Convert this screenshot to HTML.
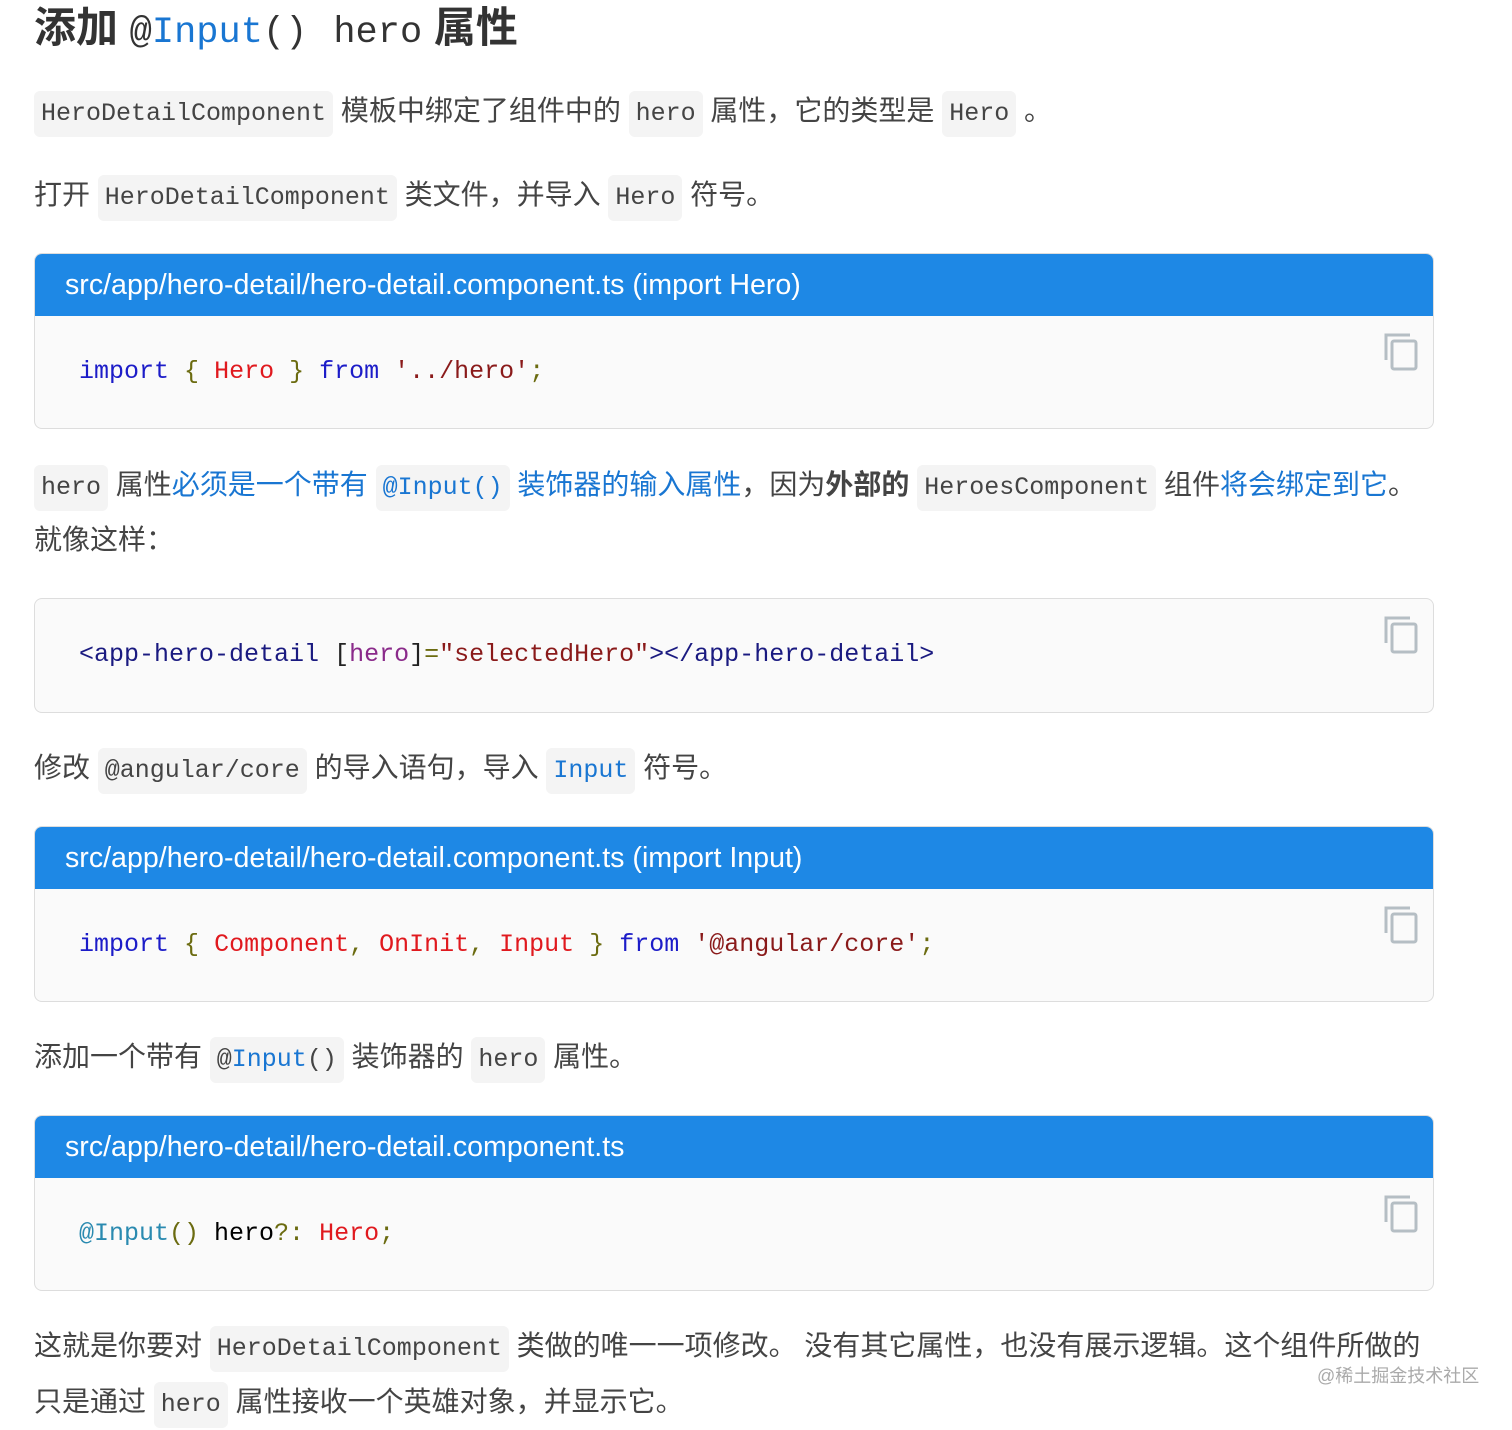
<!DOCTYPE html>
<html><head><meta charset="utf-8"><style>
body{margin:0;width:1512px;height:1419px;background:#fff;position:relative;overflow:hidden;font-family:"Liberation Sans","Noto Sans CJK SC",sans-serif;color:#444}
.ln{position:absolute;left:34px;white-space:nowrap;font-size:28px;height:56px;line-height:56px}
code{font-family:"Liberation Mono","Noto Sans CJK SC",monospace;font-size:25px;background:#f4f4f4;border-radius:6px;padding:0 7px;display:inline-block;line-height:46px;color:#444}
.a{color:#1976d2}
.blk{position:absolute;left:34px;width:1398px;border:1px solid #ddd;border-radius:8px;background:#fafafa;overflow:hidden}
.hd{background:#1e88e5;height:62px;line-height:62px;color:#fff;font-size:28.6px;padding-left:30px;white-space:nowrap}
.cd{position:relative;height:112px;font-family:"Liberation Mono",monospace;font-size:25px;line-height:112px;padding-left:44px;white-space:pre;color:#000}
.cp{position:absolute;right:14px;top:16px;width:36px;height:40px}
.k{color:#1c1cc8}.r{color:#e0191e}.s{color:#8a1a1a}.g{color:#6b6b10}.t{color:#1a1a80}.at{color:#8a2a8a}.d{color:#2a8ab0}
.m{font-family:'Liberation Mono',monospace;font-size:37px;font-weight:normal}
</style></head><body>
<div class="ln" style="top:0;font-size:42px;font-weight:bold;color:#333;height:56px;line-height:56px">添加 <span class="m">@<span class="a">Input</span>()</span><span style="display:inline-block;width:26px"></span><span class="m">hero</span> 属性</div>
<div class="ln" style="top:83px"><code>HeroDetailComponent</code> 模板中绑定了组件中的 <code>hero</code> 属性，它的类型是 <code>Hero</code> 。</div>
<div class="ln" style="top:167px">打开 <code>HeroDetailComponent</code> 类文件，并导入 <code>Hero</code> 符号。</div>
<div class="blk" style="top:253px;height:174px"><div class="hd">src/app/hero-detail/hero-detail.component.ts (import Hero)</div><div class="cd"><span class="k">import</span> <span class="g">{</span> <span class="r">Hero</span> <span class="g">}</span> <span class="k">from</span> <span class="s">'../hero'</span><span class="g">;</span><svg class="cp" viewBox="0 0 36 40"><path d="M3 28V3h24" fill="none" stroke="#b5bec4" stroke-width="3"/><rect x="9" y="9" width="24" height="28" rx="2" fill="none" stroke="#b5bec4" stroke-width="3"/></svg></div></div>
<div class="ln" style="top:457px"><code>hero</code> 属性<span class="a">必须是一个带有 <code class="a">@Input()</code> 装饰器的输入属性</span>，因为<b>外部的</b> <code>HeroesComponent</code> 组件<span class="a">将会绑定到它</span>。</div>
<div class="ln" style="top:512px">就像这样：</div>
<div class="blk" style="top:598px;height:113px"><div class="cd"><span class="t">&lt;app-hero-detail</span> <span style="color:#222">[</span><span class="at">hero</span><span style="color:#222">]</span><span class="g">=</span><span class="s">"selectedHero"</span><span class="t">&gt;&lt;/app-hero-detail&gt;</span><svg class="cp" viewBox="0 0 36 40"><path d="M3 28V3h24" fill="none" stroke="#b5bec4" stroke-width="3"/><rect x="9" y="9" width="24" height="28" rx="2" fill="none" stroke="#b5bec4" stroke-width="3"/></svg></div></div>
<div class="ln" style="top:740px">修改 <code>@angular/core</code> 的导入语句，导入 <code class="a">Input</code> 符号。</div>
<div class="blk" style="top:826px;height:174px"><div class="hd">src/app/hero-detail/hero-detail.component.ts (import Input)</div><div class="cd"><span class="k">import</span> <span class="g">{</span> <span class="r">Component</span><span class="g">,</span> <span class="r">OnInit</span><span class="g">,</span> <span class="r">Input</span> <span class="g">}</span> <span class="k">from</span> <span class="s">'@angular/core'</span><span class="g">;</span><svg class="cp" viewBox="0 0 36 40"><path d="M3 28V3h24" fill="none" stroke="#b5bec4" stroke-width="3"/><rect x="9" y="9" width="24" height="28" rx="2" fill="none" stroke="#b5bec4" stroke-width="3"/></svg></div></div>
<div class="ln" style="top:1029px">添加一个带有 <code>@<span class="a">Input</span>()</code> 装饰器的 <code>hero</code> 属性。</div>
<div class="blk" style="top:1115px;height:174px"><div class="hd">src/app/hero-detail/hero-detail.component.ts</div><div class="cd"><span class="d">@Input</span><span class="g">()</span> hero<span class="g">?:</span> <span class="r">Hero</span><span class="g">;</span><svg class="cp" viewBox="0 0 36 40"><path d="M3 28V3h24" fill="none" stroke="#b5bec4" stroke-width="3"/><rect x="9" y="9" width="24" height="28" rx="2" fill="none" stroke="#b5bec4" stroke-width="3"/></svg></div></div>
<div class="ln" style="top:1318px">这就是你要对 <code>HeroDetailComponent</code> 类做的唯一一项修改。 没有其它属性，也没有展示逻辑。这个组件所做的</div>
<div class="ln" style="top:1374px">只是通过 <code>hero</code> 属性接收一个英雄对象，并显示它。</div>
<div style="position:absolute;left:1317px;top:1362px;font-size:18px;color:#aaa;white-space:nowrap">@稀土掘金技术社区</div>
</body></html>
